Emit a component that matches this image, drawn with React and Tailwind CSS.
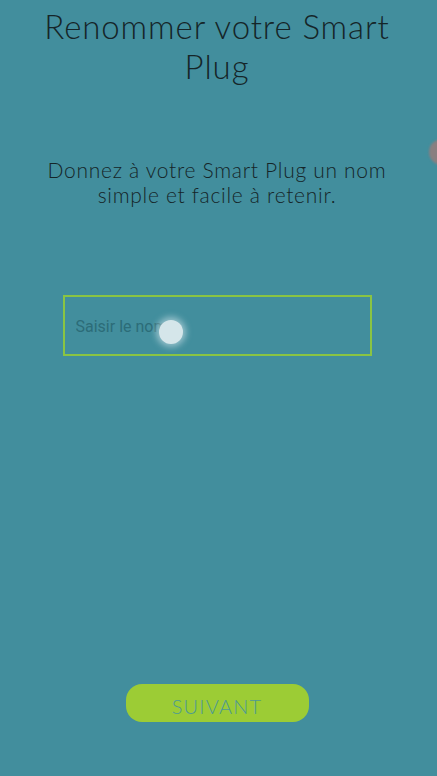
import React from 'react';

const App = () => {
  return (
    <div className="relative w-[437px] h-[776px] overflow-hidden bg-[#428e9d] flex flex-col items-center pr-[3px]" style={{ fontFamily: 'Lato, "Open Sans", sans-serif' }}>
      {/* Title */}
      <h1 className="mt-[6px] text-[33px] leading-[40px] font-light text-center text-[#152528] tracking-[0.9px] whitespace-nowrap">
        Renommer votre Smart
        <br />
        Plug
      </h1>

      {/* Subtitle */}
      <p className="mt-[71px] text-[21px] leading-[25px] font-light text-center text-[#152528] tracking-[0.7px] whitespace-nowrap">
        Donnez à votre Smart Plug un nom
        <br />
        simple et facile à retenir.
      </p>

      {/* Name input */}
      <div className="relative mt-[88px] w-[309px] h-[61px] border-2 border-[#8ac443] flex items-center px-[11px] pt-[3px]">
        <input
          type="text"
          placeholder="Saisir le nom"
          className="w-full bg-transparent outline-none text-[16px] text-[#2c6c78] placeholder:text-[#2c6c78]"
          style={{ fontFamily: 'Roboto, sans-serif' }}
        />
        {/* touch indicator */}
        <div className="absolute left-[94px] top-[23px] w-[24px] h-[24px] rounded-full bg-[#d5e6ea] shadow-[0_0_6px_3px_rgba(220,235,240,0.55)]"></div>
      </div>

      <div className="flex-1"></div>

      {/* Next button */}
      <button className="mb-[54px] w-[183px] h-[38px] rounded-[16px] bg-[#9ccc35] text-[#4e9a92] text-[20px] font-light tracking-[1.2px] pt-[5px]">
        SUIVANT
      </button>

      {/* edge floating dot */}
      <div className="absolute left-[429px] top-[139px] w-[26px] h-[26px] rounded-full bg-[#8a7f80] blur-[1px]"></div>
    </div>
  );
};

export default App;
